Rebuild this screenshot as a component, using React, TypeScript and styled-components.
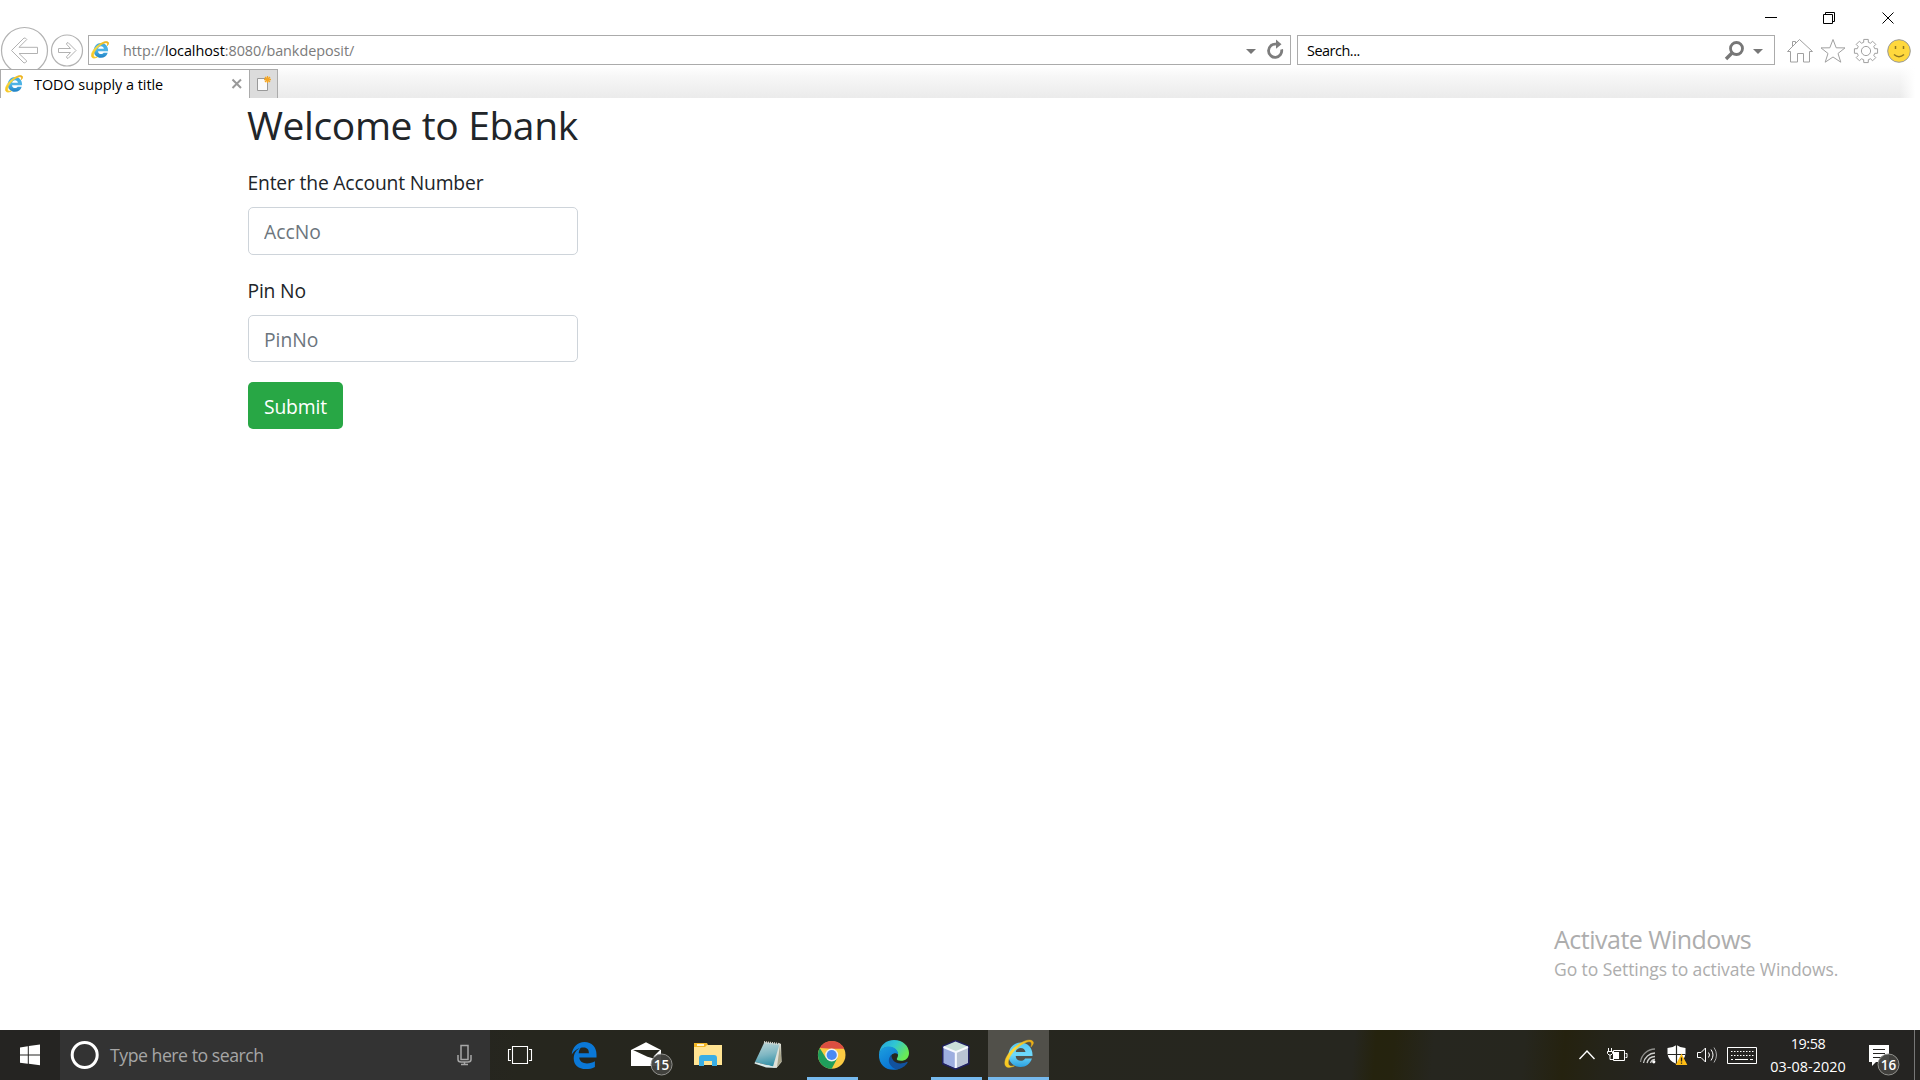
import React from "react";
import styled, { createGlobalStyle } from "styled-components";

const Global = createGlobalStyle`
  *, *::before, *::after { box-sizing: border-box; }
  body { margin: 0; background: #fff; overflow: hidden; }
  svg { display: block; flex: none; }
`;

const ui = `"Segoe UI", "Open Sans", "Noto Sans", sans-serif`;

const Screen = styled.div`
  display: flex;
  flex-direction: column;
  width: 1920px;
  height: 1080px;
  background: #fff;
  font-family: ${ui};
  overflow: hidden;
`;

const Label = styled.span<{ $size: number; $spacing?: number; $color?: string; $line?: number }>`
  font-size: ${(p) => p.$size}px;
  letter-spacing: ${(p) => p.$spacing ?? 0}px;
  color: ${(p) => p.$color ?? "inherit"};
  line-height: ${(p) => (p.$line ? `${p.$line}px` : "normal")};
  white-space: nowrap;
`;

/* ---------- Browser chrome ---------- */
const TitleBar = styled.div`
  display: flex;
  justify-content: flex-end;
  height: 35px;
  padding-right: 3px;
`;
const WindowButton = styled.div`
  display: flex;
  align-items: center;
  justify-content: center;
  width: 58.5px;
  height: 35px;
`;
const NavBar = styled.div`
  display: flex;
  height: 31px;
`;
const NavButtons = styled.div`
  width: 88px;
  height: 31px;
  svg { margin-top: -9px; }
`;
const Field = styled.div<{ $width: number }>`
  display: flex;
  align-items: center;
  width: ${(p) => p.$width}px;
  height: 30px;
  border: 1px solid #ababab;
  background: #fff;
`;
const AddressField = styled(Field)`
  padding-left: 2px;
  gap: 14px;
  margin-right: 6px;
`;
const SearchField = styled(Field)`
  padding-left: 9px;
`;
const FieldTools = styled.div`
  margin-left: auto;
`;
const Host = styled.span`
  color: #000;
`;
const Commands = styled.div`
  display: flex;
  padding-left: 9px;
`;
const TabStrip = styled.div`
  display: flex;
  align-items: flex-end;
  height: 32px;
`;
const StripFill = styled.div`
  flex: 1;
  height: 32px;
  background: linear-gradient(90deg, transparent 1622px, #fff 1637px),
    linear-gradient(#fff 0, #f6f6f6 35%, #ebebeb 100%);
`;
const Tab = styled.div`
  display: flex;
  align-items: center;
  width: 250px;
  height: 29px;
  padding: 0 6px 0 4px;
  gap: 11px;
  border: 1px solid #ababab;
  border-width: 1px 1px 0 1px;
  background: #fff;
  svg:last-child { margin-left: auto; }
`;
const NewTab = styled.div`
  display: flex;
  width: 28px;
  height: 29px;
  border: 1px solid #ababab;
  border-width: 1px 1px 0 0;
  background: #dcdcdc;
`;

/* ---------- Page ---------- */
const Page = styled.main`
  position: relative;
  flex: 1;
  padding-left: 248px;
  color: #212529;
`;
const Heading = styled.h2`
  margin: 0 0 10px -1px;
  height: 58px;
  padding-top: 3px;
  font-size: 39px;
  font-weight: 400;
  line-height: 48px;
  letter-spacing: -0.4px;
  white-space: nowrap;
`;
const Form = styled.form`
  width: 330px;
`;
const Group = styled.div`
  height: 108px;
`;
const FieldLabel = styled.label`
  display: block;
  height: 41px;
  margin-left: -0.5px;
  font-size: 19.3px;
  line-height: 34px;
  letter-spacing: -0.18px;
`;
const Input = styled.input<{ $height: number }>`
  display: block;
  width: 100%;
  height: ${(p) => p.$height}px;
  padding: 1px 15px 0;
  border: 1px solid #ced4da;
  border-radius: 5px;
  outline: none;
  font: 19.3px ${ui};
  &::placeholder { color: #6c757d; opacity: 1; }
`;
const Submit = styled.button`
  display: block;
  width: 95px;
  height: 47px;
  padding: 2px 0 0;
  border: 0;
  border-radius: 5px;
  background: #28a745;
  color: #fff;
  font: 19.3px ${ui};
  letter-spacing: -0.1px;
`;
const Watermark = styled.div`
  position: absolute;
  left: 1554px;
  top: 823px;
  display: flex;
  flex-direction: column;
  color: #adadad;
`;

/* ---------- Taskbar ---------- */
const Taskbar = styled.footer`
  display: flex;
  height: 50px;
  background: linear-gradient(95deg, #252422 0, #252422 400px, #26261e 520px, #26261f 1350px, #25230e 1372px, #25230f 1390px, #26261f 1430px, #26261e 1520px, #25220f 1560px, #25241a 1600px, #252422 1660px);
  color: #fff;
`;
const SearchBox = styled.div`
  display: flex;
  align-items: center;
  width: 430px;
  height: 50px;
  background: #333;
  padding: 0 17px 0 10px;
  gap: 11px;
  svg:last-child { margin-left: auto; }
`;
const Slot = styled.div<{ $active?: boolean; $running?: boolean }>`
  display: flex;
  justify-content: center;
  width: 62px;
  height: 50px;
  background: ${(p) => (p.$active ? "#51504a" : "transparent")};
  box-shadow: ${(p) => (p.$active ? "inset 0 -3px #76b9ed" : "none")};
  ${(p) =>
    p.$running &&
    `background: linear-gradient(#76b9ed, #76b9ed) 6px 47px / 51px 3px no-repeat;`}
`;
const TaskView = styled.div`
  width: 63px;
`;
const Tray = styled.div`
  display: flex;
  margin-left: auto;
`;
const Clock = styled.div`
  display: flex;
  flex-direction: column;
  align-items: center;
  width: 90px;
  padding-top: 2px;
`;

const IeLogo = ({ size, id }: { size: number; id: string }) => (
  <svg width={size} height={size} viewBox="0 0 30 30">
    <defs>
      <linearGradient id={`${id}b`} x1="0" y1="0" x2="0" y2="1">
        <stop offset="0" stopColor={size < 20 ? "#3fa9dd" : "#55c8f2"} />
        <stop offset=".5" stopColor={size < 20 ? "#4fb4e6" : "#6fd9fb"} />
        <stop offset="1" stopColor={size < 20 ? "#1c7fc4" : "#2a9fe0"} />
      </linearGradient>
      <linearGradient id={`${id}g`} x1="0" y1="1" x2="1" y2="0">
        <stop offset="0" stopColor="#f5c21c" />
        <stop offset=".5" stopColor="#ffdc3a" />
        <stop offset="1" stopColor="#e9a90f" />
      </linearGradient>
    </defs>
    <path
      fill={`url(#${id}b)`}
      fillRule="evenodd"
      d="M28.5 17H11.700c.2 3 2.200 4.800 5 4.800 2.100 0 3.500-.8 4.400-2.300h6.800C26.300 24.800 22 28 16.600 28 9.800 28 4.500 23 4.500 16.200S9.800 3.500 16.600 3.500c7.200 0 12.300 5.300 11.900 13.500zM11.800 13h9.700c-.3-2.500-2.300-4.100-4.800-4.100-2.600 0-4.500 1.600-4.900 4.100z"
    />
    <path
      fill={`url(#${id}g)`}
      stroke={`url(#${id}g)`}
      strokeWidth={size < 20 ? 1.3 : 0.4}
      d="M29 2.500C26-.8 19 1.800 12.200 7 5 12.500.8 19 .8 24.200c0 4.500 4.200 5.400 9.700 2.600-3.700 1-6.200.2-6.200-3C4.300 19 8 13.300 14 8.400c5-4.100 10.200-6.600 12.500-5.300 1.200.7 1.300 2.400.5 4.800C29.200 5.500 30 3.700 29 2.500z"
    />
  </svg>
);

const BackForward = () => (
  <svg width="88" height="43" viewBox="0 26 88 43" fill="none" stroke="#b2b2b2">
    <circle cx="24.500" cy="50.500" r="23" fill="#fff" strokeWidth="1.200" />
    <path d="M11.500 50.500 24 38q1.500-.5 2.800 1.500L19 47.300h18.500v6.200H19l7.800 7.500q-1 2-2.800 2z" />
    <circle cx="67" cy="50.500" r="15.500" strokeWidth="1.200" />
    <path d="M76 50.500 68 42.500q-1.500.2-1.500 1.700l4 4.300H58.500v4H70.500l-4 4.300q.2 1.600 1.500 1.700z" />
  </svg>
);

const Caption = ({ kind }: { kind: "min" | "max" | "close" }) => (
  <svg width="14" height="14" fill="none" stroke="#000" strokeWidth="1">
    {kind === "min" && <path d="M1 6.500h12" />}
    {kind === "max" && <path d="M1.500 3.500h9v9h-9zM3.500 3.500v-2h9v9h-2" />}
    {kind === "close" && <path d="M1.500 1.500l11 11M12.500 1.500l-11 11" />}
  </svg>
);

const AddressTools = () => (
  <svg width="50" height="28" viewBox="1240 36 50 28">
    <path d="M1246 49h10l-5 5z" fill="#777" />
    <path d="M1276 44.200a6.600 6.600 0 1 0 5.600 5.200" fill="none" stroke="#7d7d7d" strokeWidth="2.800" />
    <path d="M1276 39.500l5.500 4.700-5.500 4.500z" fill="#7d7d7d" />
  </svg>
);

const SearchTools = () => (
  <svg width="54" height="28" viewBox="1720 36 54 28">
    <circle cx="1736.500" cy="48.500" r="6" fill="none" stroke="#777" strokeWidth="2.800" />
    <path d="M1732 53l-6 6" stroke="#777" strokeWidth="3.300" />
    <path d="M1753 49h10l-5 5z" fill="#777" />
  </svg>
);

const gearPath = () => {
  const pts: string[] = [];
  for (let i = 0; i < 8; i++) {
    const corners: [number, number][] = [[9, -15], [11.8, -11], [11.8, 11], [9, 15]];
    corners.forEach(([r, offset]) => {
      const a = ((i * 45 + offset) * Math.PI) / 180;
      pts.push(`${(1866 + r * Math.cos(a)).toFixed(2)} ${(51 + r * Math.sin(a)).toFixed(2)}`);
    });
  }
  return `M${pts.join("L")}Z`;
};

const CommandIcons = () => (
  <svg width="130" height="31" viewBox="1784 35 130 31" fill="none" stroke="#a0a0a0">
    <path d="M1787.500 51.500 1799.500 39.500l13 12h-3v10.500h-6v-8.500h-6v8.500h-7v-10.500zM1792.500 46v-4.500h3v1.500" />
    <path d="M1833 39.500l3.200 8.300 8.800.1-7 5.600 2.800 8.700-7.800-5.200-7.800 5.200 2.800-8.700-7-5.600 8.800-.1z" />
    <path d={gearPath()} strokeLinejoin="round" />
    <circle cx="1866" cy="51" r="4.600" />
    <circle cx="1899" cy="51" r="11.300" fill="#ffd83d" stroke="#999" />
    <path d="M1895.500 46v3M1903.500 46v3" stroke="#8f7620" strokeWidth="1.500" />
    <path d="M1894 54.500q5 4.500 10 0" stroke="#8f7620" strokeWidth="1.500" />
  </svg>
);

const Badge = ({ x, y, n }: { x: number; y: number; n: number }) => (
  <g>
    <circle cx={x} cy={y} r="10.500" fill="#42423f" fillOpacity=".95" stroke="#90908c" />
    <text x={x} y={y + 5} fill="#fff" fontFamily={ui} fontWeight="600" fontSize="13.500" textAnchor="middle">{n}</text>
  </g>
);

const Edge = () => (
  <svg width="62" height="50">
    <path fill="#0b78d7" d="M18.700 24.600C19.600 17 24.500 12 31.500 12c7.300 0 12 5 12 12.500v3H26.300c.2 4 3.500 5.900 7.700 5.900 2.900 0 5.500-.7 7.900-2.100v5.600c-2.700 1.500-5.800 2.200-9.200 2.200-7.200 0-12-4.100-12-10.600 0-5 2.700-8.900 7-10.700-1.200 1.500-1.800 3.300-2 5.400h10.200c0-3.500-1.600-5.700-5.200-5.700-4.700 0-9 2.400-12 7.100z" />
  </svg>
);
const Mail = () => (
  <svg width="62" height="50">
    <path fill="#fff" d="M16 20 31 12.300 46 20v16H16z" />
    <path fill="#26261d" d="M18 20h27l-6.500 6.500 3.500 3-9.500-2.700z" />
    <Badge x={46.6} y={34.5} n={15} />
  </svg>
);
const Folder = () => (
  <svg width="62" height="50">
    <path fill="#f2b626" d="M17 13h13l1.500 3H44v4H17z" />
    <path fill="#fff3cc" d="M20 14h7v2h-7z" />
    <path fill="#ffe392" d="M17 17h11l2-2h15v20H17z" />
    <path fill="#39aee5" d="M22 36V28q0-3 3-3h12q3 0 3 3v8h-5v-5h-8v5z" />
  </svg>
);
const Notepad = () => (
  <svg width="62" height="50">
    <defs>
      <linearGradient id="note" x1=".4" y1="0" x2=".6" y2="1">
        <stop offset="0" stopColor="#b9d4d7" />
        <stop offset=".5" stopColor="#7fb7c3" />
        <stop offset="1" stopColor="#2e8ea6" />
      </linearGradient>
    </defs>
    <path fill="#dfe1d8" d="M40 13l2 1 .5 18-5 6L28 36z" />
    <path fill="#a9a58b" d="M41 14.500l1.500 17-4.500 5.500z" />
    <path fill="url(#note)" d="M25.500 12 40.500 14 34 36.500 16 32z" />
    <path fill="#d9e9e9" d="M16 32l18 4.500 4 1.500-11-.5-11.500-4z" />
    <path d="M25 12.200l15.500 2" stroke="#d6d4cc" strokeWidth="2.500" strokeDasharray="1 1" />
  </svg>
);
const Chrome = () => (
  <svg width="62" height="50">
    <g transform="translate(30.700 25)">
      <circle r="13.800" fill="#fbcb43" />
      <path fill="#dc4e41" d="M-11.950-6.900A13.800 13.800 0 0 1 12.600-6.200H0z" />
      <path fill="#1f9e5b" d="M-11.950-6.900A13.800 13.800 0 0 0 0 13.800L5.600 3.200-5.600 3.200z" />
      <circle r="6.500" fill="#f1f1f1" />
      <circle r="5.100" fill="#4a89f3" />
    </g>
  </svg>
);
const NewEdge = () => (
  <svg width="62" height="50">
    <defs>
      <linearGradient id="wave" x1="0" y1="0" x2="1" y2=".5">
        <stop offset="0" stopColor="#249fdf" />
        <stop offset=".5" stopColor="#30c6d3" />
        <stop offset="1" stopColor="#69e955" />
      </linearGradient>
      <linearGradient id="sea" x1="0" y1="0" x2=".6" y2="1">
        <stop offset="0" stopColor="#1da0df" />
        <stop offset="1" stopColor="#0870d2" />
      </linearGradient>
    </defs>
    <path fill="url(#wave)" d="M16 24C17 15 23 10 31 10c9 0 15 6 15 13 0 5-3.500 7.800-8 7.800-3 0-4.500-1-4.200-2 .5-1 1.200-2 1.200-3.700C35 20 30 17 25 17c-4 0-7 2.500-9 7z" />
    <path fill="url(#sea)" d="M16 24c1.500-5 5-7.500 10-7.500 5.500 0 9.300 4 9.200 8-1.200-1.200-3-1.500-4.800-.8-3.500 1.300-4.400 5-3 8 2.100 4.800 7.300 7.300 10.200 6.500C29 42.500 15 38.500 16 24z" />
    <path fill="#12529e" d="M28.500 24.700c-4 3.500-4.100 10.300 3.800 14.300 5.300.8 10-2.700 12.200-6.200.4-.8-.2-1.200-1-.8-8.500 4-15.500-1-15-7.300z" />
  </svg>
);
const NetBeans = () => (
  <svg width="62" height="50">
    <path fill="#edf0f3" stroke="#20205f" strokeWidth="2" d="M30.500 11l13 5.500v17L30.500 39 18 33.500v-17z" />
    <path fill="#c9e0d9" d="M30.500 11.500l12.500 5L30.500 22l-12-5.500z" />
    <path fill="#9daee0" d="M18.500 17l12 5.300v16L18.500 33z" />
    <path fill="#b9c3d3" d="M43 17L31.500 22.300v15.800L43 33.100z" />
    <path d="M18.500 17l12.300 5.200L43 17M30.800 22v16" stroke="#f7f9ff" strokeWidth="2" fill="none" />
  </svg>
);

const TrayIcons = () => (
  <svg width="190" height="50" viewBox="1573 1030 190 50" fill="none" stroke="#fff">
    <path d="M1579.500 1059l7.500-8 7.500 8" strokeWidth="1.400" />
    <path d="M1613.500 1050.500h11v10h-11zM1625.500 1053.500h1.500v4h-1.500" />
    <path d="M1614 1052h5v7h-5z" fill="#fff" stroke="none" />
    <path d="M1608.500 1048v3M1611.500 1048v3M1607.500 1051.500h5v2l-1.500 1.500h-2l-1.500-1.500zM1610 1055v4.500h3" />
    <g strokeWidth="1.300" stroke="#d0d0ce">
      <path d="M1640.500 1062a15 15 0 0 1 14.500-13" stroke="#8f8f8c" />
      <path d="M1643.500 1063a12 12 0 0 1 11.500-10" />
      <path d="M1647 1063a8.500 8.500 0 0 1 8-6.500" />
      <path d="M1650.500 1063a5 5 0 0 1 4.500-3.500" />
    </g>
    <circle cx="1653.800" cy="1061.800" r="1.600" fill="#fff" stroke="none" />
    <path d="M1667.500 1048q5 0 9-3 4 3 9 3v6q-1 7-9 10-8-3-9-10z" fill="#fff" stroke="none" />
    <path d="M1676.500 1045v19M1667.500 1054.500h18" stroke="#262622" strokeWidth="1.200" />
    <path d="M1681.500 1053.500l5.800 11.500h-11.600z" fill="#ffbd16" stroke="none" />
    <path d="M1681.500 1057.500v4M1681.500 1062.500v1.300" stroke="#2b2617" strokeWidth="1.300" />
    <path d="M1697.500 1052.500h3.500l4.500-4.500v14l-4.500-4.500h-3.500z" />
    <path d="M1708.500 1052.500q2 2.500 0 5M1711 1049.500q4 5.500 0 11" />
    <path d="M1714 1047.500q5 7.500 0 15" stroke="#aaa" />
    <path d="M1727.500 1047.500h29v16h-29z" />
    <path d="M1731 1051.500h23M1731 1055.500h23" strokeDasharray="1.500 1.500" />
    <path d="M1731 1059.500h2M1735 1059.500h13M1750 1059.500h3" />
  </svg>
);

const apps = [
  { icon: <Edge /> },
  { icon: <Mail /> },
  { icon: <Folder /> },
  { icon: <Notepad /> },
  { icon: <Chrome />, running: true },
  { icon: <NewEdge /> },
  { icon: <NetBeans />, running: true },
];

const IeSlot = styled(Slot)`
  width: 61px;
  margin-left: 1px;
  padding-top: 9px;
`;

export default function App() {
  return (
    <Screen>
      <Global />
      <TitleBar>
        <WindowButton><Caption kind="min" /></WindowButton>
        <WindowButton><Caption kind="max" /></WindowButton>
        <WindowButton><Caption kind="close" /></WindowButton>
      </TitleBar>
      <NavBar>
        <NavButtons><BackForward /></NavButtons>
        <AddressField $width={1203}>
          <IeLogo size={18} id="addr" />
          <Label $size={14.4} $spacing={-0.05} $color="#7b7b7b">
            http://<Host>localhost</Host>:8080/bankdeposit/
          </Label>
          <FieldTools><AddressTools /></FieldTools>
        </AddressField>
        <SearchField $width={478}>
          <Label $size={14.4} $spacing={-0.45} $color="#000">Search...</Label>
          <FieldTools><SearchTools /></FieldTools>
        </SearchField>
        <Commands><CommandIcons /></Commands>
      </NavBar>
      <TabStrip>
        <Tab>
          <IeLogo size={18} id="tab" />
          <Label $size={14.4} $spacing={-0.03} $color="#000">TODO supply a title</Label>
          <svg width="12" height="12"><path d="M1.500 1.500l8.500 8.500M10 1.500l-8.500 8.500" stroke="#999" strokeWidth="2" /></svg>
        </Tab>
        <NewTab>
          <svg width="27" height="28" viewBox="250 70 27 28">
            <path d="M257.500 78.500h10v12h-10z" fill="#fafafa" stroke="#999" />
            <path d="M267.500 76v7M264 79.500h7M265 77l5 5M270 77l-5 5" stroke="#f5a623" strokeWidth="1.300" />
          </svg>
        </NewTab>
        <StripFill />
      </TabStrip>

      <Page>
        <Heading>Welcome to Ebank</Heading>
        <Form onSubmit={(e) => e.preventDefault()}>
          <Group>
            <FieldLabel htmlFor="acc">Enter the Account Number</FieldLabel>
            <Input id="acc" placeholder="AccNo" $height={48} />
          </Group>
          <Group>
            <FieldLabel htmlFor="pin">Pin No</FieldLabel>
            <Input id="pin" placeholder="PinNo" $height={47} />
          </Group>
          <Submit type="submit">Submit</Submit>
        </Form>
        <Watermark>
          <Label $size={25} $line={36} $spacing={-0.5}>Activate Windows</Label>
          <Label $size={17.5} $line={24} $spacing={-0.07}>Go to Settings to activate Windows.</Label>
        </Watermark>
      </Page>

      <Taskbar>
        <svg width="60" height="50">
          <path fill="#fff" d="M20 17.400l7.800-1.200v8.300H20zM28.800 16l11.200-1.400v9.900H28.800zM20 25.500h7.800v8.300L20 32.700zM28.800 25.500H40v9.800l-11.200-1.500z" />
        </svg>
        <SearchBox>
          <svg width="29" height="30">
            <circle cx="14.700" cy="15" r="12.500" fill="none" stroke="#fff" strokeWidth="3" />
          </svg>
          <Label $size={17.7} $spacing={-0.48} $color="#a6a6a6">Type here to search</Label>
          <svg width="17" height="22" fill="none" stroke="#a6a6a6" strokeWidth="1.500">
            <path d="M5 1.500h7v14H5zM2 11v4.500q0 2.500 3 2.500h7q3 0 3-2.500V11M8.500 18v3M5 20.500h7" />
          </svg>
        </SearchBox>
        <TaskView>
          <svg width="62" height="50" fill="none" stroke="#fff" strokeWidth="1.100">
            <path d="M22.500 16.500h15v17h-15zM21 19.500h-2.500v11H21M39 19.500h2.500v11H39" />
          </svg>
        </TaskView>
        {apps.map((app, i) => (
          <Slot key={i} $running={app.running}>{app.icon}</Slot>
        ))}
        <IeSlot $active><IeLogo size={30} id="task" /></IeSlot>
        <Tray>
          <TrayIcons />
          <Clock>
            <Label $size={14.4} $line={23} $spacing={-0.4}>19:58</Label>
            <Label $size={14.4} $line={23} $spacing={0.05}>03-08-2020</Label>
          </Clock>
          <svg width="67" height="50" viewBox="1853 1030 67 50">
            <path fill="#fff" d="M1869 1045h20v17h-13l-4 4v-4h-3z" />
            <path d="M1873 1049.500h12M1873 1053.500h12M1873 1057.500h8" stroke="#252422" />
            <Badge x={1888.5} y={1064.5} n={16} />
            <path d="M1914.500 1030v50" stroke="#777" />
          </svg>
        </Tray>
      </Taskbar>
    </Screen>
  );
}
